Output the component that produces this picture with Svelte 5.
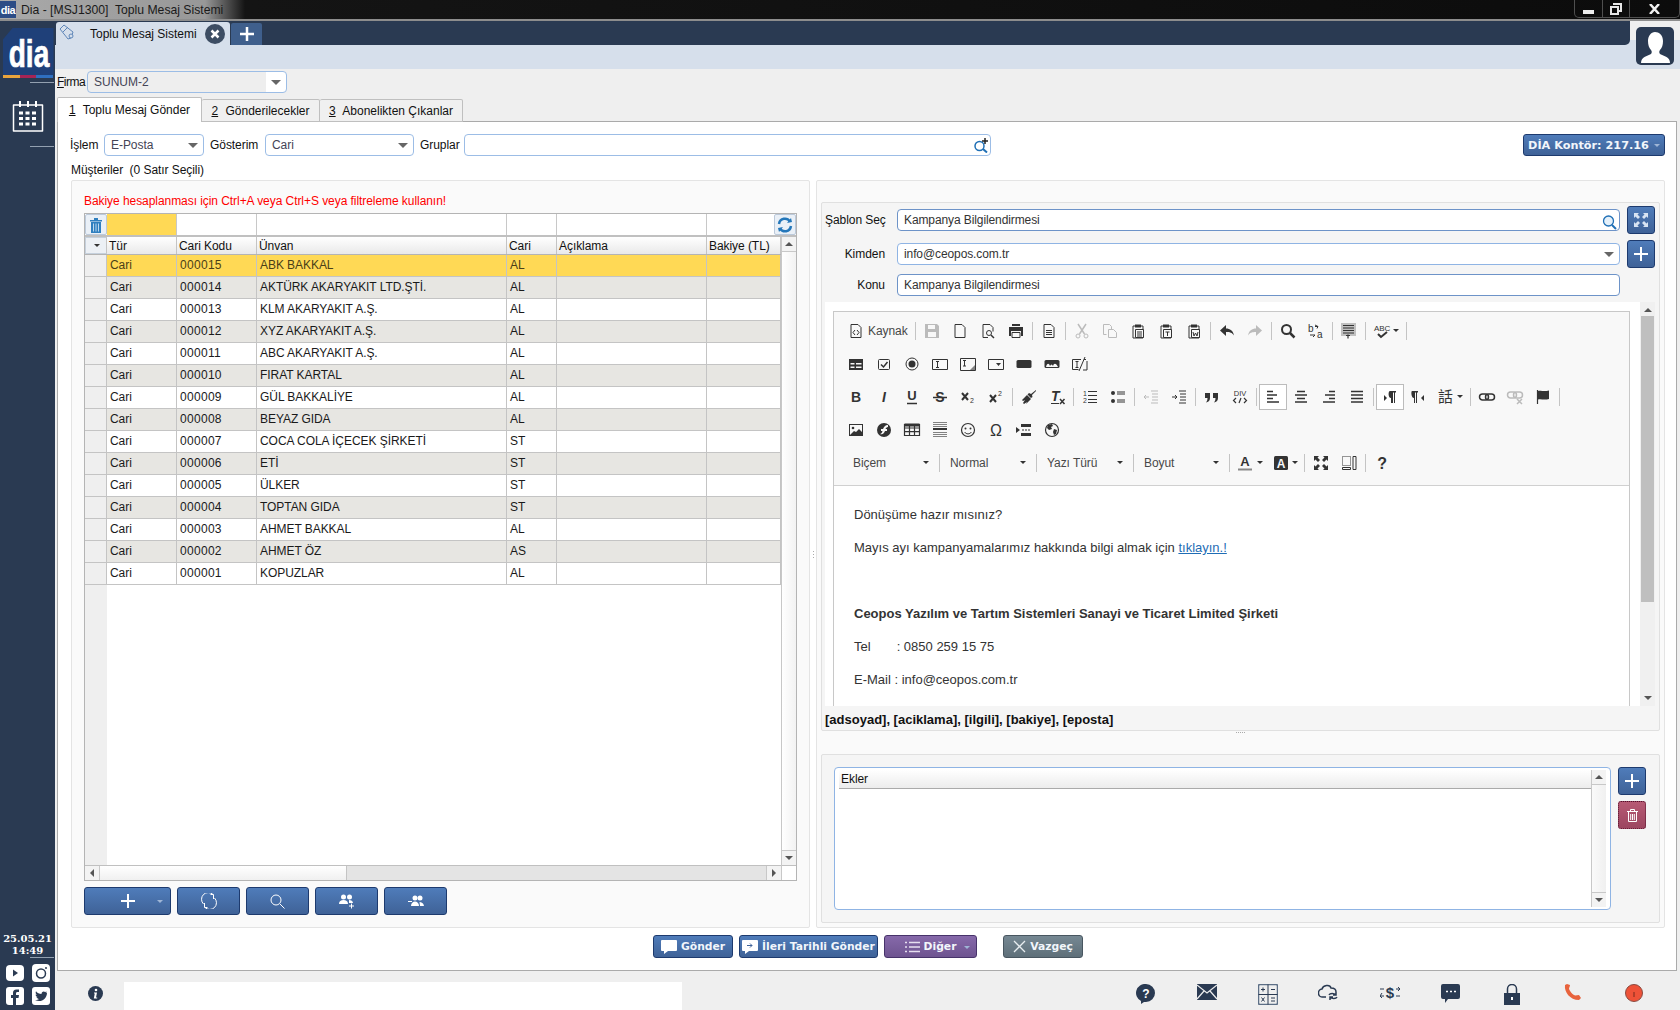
<script>
  const rows = [
    ['000015', 'ABK BAKKAL', 'AL'],
    ['000014', 'AKTÜRK AKARYAKIT LTD.ŞTİ.', 'AL'],
    ['000013', 'KLM AKARYAKIT A.Ş.', 'AL'],
    ['000012', 'XYZ AKARYAKIT A.Ş.', 'AL'],
    ['000011', 'ABC AKARYAKIT A.Ş.', 'AL'],
    ['000010', 'FIRAT KARTAL', 'AL'],
    ['000009', 'GÜL BAKKALİYE', 'AL'],
    ['000008', 'BEYAZ GIDA', 'AL'],
    ['000007', 'COCA COLA İÇECEK ŞİRKETİ', 'ST'],
    ['000006', 'ETİ', 'ST'],
    ['000005', 'ÜLKER', 'ST'],
    ['000004', 'TOPTAN GIDA', 'ST'],
    ['000003', 'AHMET BAKKAL', 'AL'],
    ['000002', 'AHMET ÖZ', 'AS'],
    ['000001', 'KOPUZLAR', 'AL']
  ]

  const f = 'fill="currentColor" stroke="none"'
  const lines = (x1, x2, ys) => ys.map((y) => `<path d="M${x1} ${y}H${x2}"/>`).join('')
  const clip = '<path d="M5 3H3v12h10V3h-2"/><path d="M5 1.500h6v3H5z" ' + f + '/>'

  // editor icons, 16 box
  const ic = {
    source: '<path d="M3 1.500h7l3 3v10H3z"/><path d="M7 7 5 9.500l2 2.500M9 7l2 2.500L9 12"/>',
    save: `<path ${f} d="M1 1h12l2 2v12H1z"/><path d="M4 2h7v4H4zM4 9h8v5H4z" fill="#f8f8f8" stroke="none"/>`,
    newpage: '<path d="M3 1.500h7l3 3v10H3z"/>',
    preview: '<path d="M3 14.500v-13h7l3 3v4"/><path d="M3 14.500h5"/><circle cx="9" cy="10" r="2.500"/><path d="m11 12 3 3" stroke-width="1.500"/>',
    print: `<path ${f} d="M4 1h8v2H4zM1 4h14v9h-2V8H3v5H1z"/><path d="M4 9.500h8v5H4z"/>`,
    doc: '<path d="M3 1.500h7l3 3v10H3z"/>' + lines(5, 11, [7.5, 9.5, 11.5]),
    cut: '<path d="M4 1l6.500 10M12 1 5.500 11" stroke-width="1.500"/><circle cx="4" cy="13" r="2"/><circle cx="12" cy="13" r="2"/>',
    copy: '<path d="M1.500 1.500h6l2 2v3M1.500 1.500v10h3"/><path d="M6.500 6.500h5l3 3v5h-8z"/>',
    paste: clip + '<path d="M5.500 6.500h8v8h-8z" fill="#f8f8f8"/>' + lines(7, 12, [9, 11, 13]),
    pastet: clip + '<path d="M5.500 6.500h8v8h-8z" fill="#f8f8f8"/><path d="M7.500 9h4M9.500 9v4"/>',
    pastew: clip + '<path d="M5.500 6.500h8v8h-8z" fill="#f8f8f8"/><path d="M7 9l1 4 1.500-3 1.500 3 1-4"/>',
    undo: `<path ${f} d="M1 7.500 7 2v3.500c4 0 7 2 8 7-2-3-4-3.500-8-3.500V13z"/>`,
    redo: `<path ${f} d="M15 7.500 9 2v3.500c-4 0-7 2-8 7 2-3 4-3.500 8-3.500V13z"/>`,
    find: '<circle cx="6.500" cy="6.500" r="4.500" stroke-width="2"/><path d="m10 10 4.500 4.500" stroke-width="2.500"/>',
    replace: '<text x="0" y="8.500" font-size="10" fill="currentColor" stroke="none">b</text><text x="9" y="15" font-size="10" fill="currentColor" stroke="none">a</text><path d="m7 2 3 1.500-1 2M7 3.500h3M2 12h5l-2 2"/>',
    selectall: `<path ${f} d="M0 0h15v13H0z" opacity=".28"/><path stroke-width="1.200" d="M2 2.500h11M2 5h11M2 7.500h11M2 10h11M5 12.500h4M7 11.500v4"/>`,
    spell: '<text x="0" y="7.500" font-size="8" fill="currentColor" stroke="none">ABC</text><path d="m4 11 3 3 6-5" stroke-width="2"/>',
    form: `<path ${f} d="M1 3h14v11H1z"/><path d="M2.500 7h4v1.500h-4zM2.500 10.500h4V12h-4zM8 7h5.500v1.500H8zM8 10.500h5.500V12H8z" fill="#f8f8f8" stroke="none"/>`,
    check: '<rect x="2.500" y="3.500" width="11" height="10" rx="1"/><path d="m5 8.500 2.500 2.500 4-5" stroke-width="1.500"/>',
    radio: `<circle cx="8" cy="8" r="6"/><circle cx="8" cy="8" r="3.500" ${f}/>`,
    text: '<path d="M.5 3.500h15v10H.5zM4 5.500h3M4 11.500h3M5.500 5.500v6"/>',
    area: `<path d="M.5 2.500h15v12H.5zM3 4.500h3M3 10h3M4.500 4.500V10"/><path ${f} d="M15 9v5H10z" opacity=".6"/>`,
    select: `<path d="M.5 3.500h15v10H.5z"/><path ${f} d="m8 7h5l-2.500 3z"/>`,
    button: `<rect x=".5" y="4" width="15" height="8" rx="1.500" ${f}/>`,
    imgbutton: `<rect x=".5" y="4" width="15" height="8" rx="1.500" ${f}/><path d="M2 11c1-4 3-4 4-1 1-2 2-2 3 0 1-3 3-3 5 1z" fill="#f8f8f8" stroke="none"/>`,
    hidden: '<path d="M9 3.500H.5v10h6M12 3.500h2M15 5v9h-4" /><path d="M3.500 5.500h3M3.500 11.500h3M5 5.500v6M7 15 13 1"/>',
    b: '<text x="8" y="13" font-size="14" font-weight="700" text-anchor="middle" fill="currentColor" stroke="none">B</text>',
    i: '<text x="8" y="13" font-size="14" font-weight="700" font-style="italic" text-anchor="middle" fill="currentColor" stroke="none">I</text>',
    u: '<text x="8" y="11" font-size="13" font-weight="700" text-anchor="middle" fill="currentColor" stroke="none">U</text><path d="M3 14.500h10" stroke-width="1.500"/>',
    s: '<text x="8" y="13" font-size="14" font-weight="700" text-anchor="middle" fill="currentColor" stroke="none">S</text><path d="M1 8.500h14" stroke-width="1.500"/>',
    sub: '<path d="m2 4 6 7M8 4l-6 7" stroke-width="2"/><text x="10" y="14" font-size="7" fill="currentColor" stroke="none">2</text>',
    sup: '<path d="m2 6 6 7M8 6l-6 7" stroke-width="2"/><text x="10" y="6.500" font-size="7" fill="currentColor" stroke="none">2</text>',
    brush: `<path ${f} d="M15 1 10 5 8 4l-1.500 1.500 3.500 3.500L11.500 8 11 6l4-4zM6 6 1 11l1 1 2-1-2 3 1 1 3-2-1 2 5-5z"/>`,
    clear: '<text x="2" y="12" font-size="14" font-weight="700" font-style="italic" fill="currentColor" stroke="none">T</text><path d="M2 14.500h8"/><path d="m11 10 4.500 5M15.500 10 11 15" stroke-width="1.500"/>',
    ol: '<text x="1" y="7" font-size="7" fill="currentColor" stroke="none">1</text><text x="1" y="14" font-size="7" fill="currentColor" stroke="none">2</text>' + lines(6, 15, [2.5, 6.5, 10.5, 13.5]),
    ul: `<circle cx="3" cy="4" r="2" ${f}/><circle cx="3" cy="12" r="2" ${f}/>` + lines(7, 15, [3, 5, 11, 13]),
    outdent: '<path d="M8 2h7M9 5h6M9 8h6M9 11h6M8 14h7M1 8h5M3 6 1 8l2 2"/>',
    indent: '<path d="M8 2h7M9 5h6M9 8h6M9 11h6M8 14h7M1 8h5M4 6l2 2-2 2"/>',
    quote: `<path ${f} d="M1 4h5v5c0 3-2 4-4 4.500C3 12 3.500 11 3.500 9H1zM9 4h5v5c0 3-2 4-4 4.500 1-1.500 1.500-2.500 1.500-4.500H9z"/>`,
    div: '<text x="8" y="7" font-size="7.500" text-anchor="middle" fill="currentColor" stroke="none">DIV</text><path d="M4 9 1.500 11.500 4 14M12 9l2.500 2.500L12 14M9 9l-2 5" stroke-width="1.200"/>',
    left: '<path stroke-width="1.500" d="M2 2.500h6M2 6h10M2 9.500h6M2 13h12"/>',
    center: '<path stroke-width="1.500" d="M4 2.500h8M2 6h12M4 9.500h8M2 13h12"/>',
    right: '<path stroke-width="1.500" d="M8 2.500h6M4 6h10M8 9.500h6M2 13h12"/>',
    justify: '<path stroke-width="1.500" d="M2 2.500h12M2 6h12M2 9.500h12M2 13h12"/>',
    ltr: `<path ${f} d="M2 6l3 3-3 3zM8 2h6v1.500h-1V14h-1V3.500h-1V14H9V9c-3 0-3-7-1-7z"/>`,
    rtl: `<path ${f} d="M14 6l-3 3 3 3zM2 2h6v1.500H7V14H6V3.500H5V14H4V9c-3 0-3-7-2-7z"/>`,
    lang: '<text x="0" y="13" font-size="15" fill="currentColor" stroke="none" font-family="Noto Sans CJK TC">話</text>',
    link: '<rect x=".5" y="5" width="9" height="6" rx="3" stroke-width="1.500"/><rect x="6.500" y="5" width="9" height="6" rx="3" stroke-width="1.500"/>',
    unlink: '<rect x=".5" y="3" width="9" height="6" rx="3" stroke-width="1.500"/><rect x="6.500" y="3" width="9" height="6" rx="3" stroke-width="1.500"/><path d="m10 10 5 5M15 10l-5 5" stroke-width="1.500"/>',
    anchor: `<path d="M2.500 1v14" stroke-width="1.200"/><path ${f} d="M3 2c3-1 5 1 11-.5V10c-5 1.500-8-.5-11 .5z"/>`,
    image: `<path ${f} d="M1 2h14v12H1z"/><path d="M2 3h12v7l-3-3-3 3-2-1-4 4z" fill="#f8f8f8" stroke="none"/><circle cx="5" cy="6" r="1.300" ${f}/>`,
    flash: `<circle cx="8" cy="8" r="7" ${f}/><path d="M12 3c-3 0-4 2-5 4H5v2h1.500c-.5 2-1.500 3-2.500 3 3 1 4-1 5-3h2V7H9.500c.5-1 1-2 2.500-2z" fill="#f8f8f8" stroke="none"/>`,
    table: '<path stroke-width="1.200" d="M.5 2.500h15v11H.5zM.5 6h15M.5 9.700h15M5.500 2.500v11M10.500 2.500v11"/><path stroke-width="3" d="M.5 3h15"/>',
    hr: '<path d="M1 .5h14M1 2.500h14M1 4.500h14" opacity=".6"/><path d="M1 7h14" stroke-width="2"/><path d="M1 10.500h14M1 12.500h14M1 14.500h14" opacity=".6"/>',
    smile: `<circle cx="8" cy="8" r="6.500" stroke-width="1.200"/><circle cx="5.500" cy="6.500" r="1" ${f}/><circle cx="10.500" cy="6.500" r="1" ${f}/><path d="M4.500 10c2 2.500 5 2.500 7 0"/>`,
    omega: '<text x="8" y="14" font-size="16" text-anchor="middle" fill="currentColor" stroke="none">Ω</text>',
    pagebreak: `<path ${f} d="M0 5l4 3-4 3zM5 2h10v3H5zM5 11h10v3H5z"/><path d="M6 8h9" stroke-dasharray="2 1"/>`,
    globe: `<circle cx="8" cy="8" r="6.500" stroke-width="1.200"/><path ${f} d="M4 3l4-1 1 2-2 1 1 2-3 1-2-2zM10 7l3 1-1 4-2 1-1-3z"/>`,
    fgcolor: '<text x="7" y="11" font-size="13" font-weight="700" text-anchor="middle" fill="currentColor" stroke="none">A</text><path d="M0 14.500h14" stroke="#888" stroke-width="2"/>',
    bgcolor: `<rect x="1" y="1" width="14" height="14" rx="1.500" ${f}/><text x="8" y="13" font-size="12" font-weight="700" text-anchor="middle" fill="#f8f8f8" stroke="none">A</text>`,
    maximize: `<path ${f} d="M1 1h5L4.500 2.500 7 5 5 7 2.500 4.500 1 6zM15 1v5l-1.500-1.500L11 7 9 5l2.500-2.500L10 1zM1 15v-5l1.500 1.500L5 9l2 2-2.500 2.500L6 15zM15 15h-5l1.500-1.500L9 11l2-2 2.500 2.500L15 10z"/>`,
    blocks: '<path stroke-dasharray="1 1" d="M1.500 1.500h8v9h-8z"/><path d="M1.500 12.500h8v2h-8zM12 1.500h3v13h-3z"/>',
    help: '<text x="8" y="14" font-size="16" font-weight="700" text-anchor="middle" fill="currentColor" stroke="none">?</text>'
  }

  const bar1 = [
    ['save', 'dim'], ['newpage'], ['preview'], ['print'], null, ['doc'], null,
    ['cut', 'dim'], ['copy', 'dim'], ['paste'], ['pastet'], ['pastew'], null,
    ['undo'], ['redo', 'dim'], null, ['find'], ['replace'], null, ['selectall'], null
  ]
  const bar2 = ['form', 'check', 'radio', 'text', 'area', 'select', 'button', 'imgbutton', 'hidden'].map((n) => [n])
  const bar3 = [
    ['b'], ['i'], ['u'], ['s'], ['sub'], ['sup'], null, ['brush'], ['clear'], null, ['ol'], ['ul'], null,
    ['outdent', 'dim'], ['indent'], null, ['quote'], ['div'], null,
    ['left', 'on'], ['center'], ['right'], ['justify'], null, ['ltr', 'on'], ['rtl'], ['lang', 'drop'], null,
    ['link'], ['unlink', 'dim'], ['anchor'], null
  ]
  const bar4 = ['image', 'flash', 'table', 'hr', 'smile', 'omega', 'pagebreak', 'globe'].map((n) => [n])
  const combos = [['Biçem', 95], ['Normal', 92], ['Yazı Türü', 92], ['Boyut', 91]]
</script>

{#snippet tool(item)}
  {#if item === null}
    <span class="sep"></span>
  {:else}
    <span class="tool" class:dim={item[1] === 'dim'} class:on={item[1] === 'on'} class:wide={item[1] === 'drop'}>
      <svg width="16" height="16" viewBox="0 0 16 16" fill="none" stroke="currentColor">{@html ic[item[0]]}</svg>
      {#if item[1] === 'drop'}<span class="mini"></span>{/if}
    </span>
  {/if}
{/snippet}

<div class="app">
  <header class="titlebar">
    <div class="winlogo">dia</div>
    <span class="wintitle">Dia - [MSJ1300]&nbsp; Toplu Mesaj Sistemi</span>
    <div class="winbtns">
      <span class="wb w1"><i class="min"></i></span>
      <span class="wb w2"><svg width="12" height="12" viewBox="0 0 12 12" fill="none" stroke="#e8e8e8" stroke-width="2"><path d="M4 2V1h7v7h-2"/><path d="M1 4h7v7H1z"/></svg></span>
      <span class="wb w3"><svg width="11" height="10" viewBox="0 0 11 10" stroke="#f0f0f0" stroke-width="2.500"><path d="m1 0 9 10M10 0 1 10"/></svg></span>
    </div>
  </header>

  <div class="shell">
    <aside class="sidebar">
      <div class="logo"><span>dia</span></div>
      <div class="stripe"><i style="background:#e8a33d"></i><i style="background:#a62455"></i><i style="background:#2f6fc0"></i></div>
      <div class="rule"></div>
      <svg class="cal" width="32" height="32" viewBox="0 0 32 32" fill="none" stroke="#fff">
        <path stroke-width="1.500" d="M1.500 5h29v26h-29z" stroke-linejoin="round"/>
        <path stroke-width="2" d="M8 1v6M16 1v6M24 1v6"/>
        <path stroke-width="3" stroke-dasharray="4 2.500" d="M7 13h19M7 18.500h19M7 24h19"/>
      </svg>
      <div class="rule r2"></div>
      <div class="clock"><b>25.05.21</b><b>14:49</b></div>
      <div class="rule r3"></div>
      <div class="social">
        <svg width="18" height="16" viewBox="0 0 18 16"><rect width="18" height="16" rx="4" fill="#fff"/><path d="m7 4.500 5 3.500-5 3.500z" fill="#2a3a52"/></svg>
        <svg width="18" height="18" viewBox="0 0 18 18" fill="none"><rect width="18" height="18" rx="4" fill="#fff"/><circle cx="9" cy="9.500" r="4.500" stroke="#2a3a52" stroke-width="1.500"/><circle cx="14" cy="4" r="1" fill="#2a3a52"/></svg>
        <svg width="18" height="18" viewBox="0 0 18 18"><rect width="18" height="18" rx="3" fill="#fff"/><path d="M10 18v-7h2.500l.5-3h-3V6.500c0-1 .5-1.500 1.500-1.500H13V2.500h-2.500C8 2.500 7 4 7 6v2H5v3h2v7z" fill="#2a3a52"/></svg>
        <svg width="18" height="18" viewBox="0 0 18 18"><rect width="18" height="18" rx="3" fill="#fff"/><path d="M15 5.500c-.5.200-1 .400-1.500.400.500-.300 1-.800 1.200-1.400-.5.300-1 .500-1.600.600C12 3.800 9.300 4.500 9.500 7 7.300 7 5.300 6 4 4.300c-.7 1.200-.3 2.700.8 3.500-.4 0-.8-.100-1.200-.300 0 1.300.9 2.300 2.100 2.600-.4.100-.8.100-1.200 0 .3 1 1.300 1.800 2.400 1.800C6 12.700 4.500 13.200 3 13c5.500 3 12-.5 12-7.500z" fill="#2a3a52"/></svg>
      </div>
    </aside>

    <main class="main">
      <div class="tabbar">
        <div class="apptab">
          <svg class="tabicon" width="16" height="16" viewBox="0 0 16 16" fill="none" stroke="#5f86b8"><path d="m1 5 4-4 9 7-2 6-3 1z"/><path d="m4 8 5-5" /><circle cx="12" cy="12" r="2" fill="#d6dfeb"/></svg>
          <span class="tabtext">Toplu Mesaj Sistemi</span>
          <svg width="20" height="20" viewBox="0 0 20 20"><circle cx="10" cy="10" r="10" fill="#3d4d63"/><path d="m6.500 6.500 7 7M13.500 6.500l-7 7" stroke="#fff" stroke-width="2.500"/></svg>
        </div>
        <div class="addtab"><svg width="14" height="14" viewBox="0 0 14 14" stroke="#fff" stroke-width="2.500"><path d="M7 0v14M0 7h14"/></svg></div>
      </div>
      <div class="band"></div>
      <div class="avatar">
        <svg width="38" height="38" viewBox="0 0 38 38"><rect width="38" height="38" rx="5" fill="#2a3a52"/><path d="M5 36c0-6 6-7 10-9 1-1 1-3 0-4-2-2-3-5-3-9 0-5 3-9 7-9s8 3 8 9c0 4-1 7-3 9-1 1-1 3 0 4 4 2 10 3 10 9z" fill="#fff"/></svg>
      </div>

      <div class="firma">
        <label for="firma"><u>F</u>irma</label>
        <div class="combo firmabox" id="firma"><span class="val">SUNUM-2</span><span class="caret"></span></div>
      </div>

      <nav class="tabs">
        <span class="tab active"><u>1</u> Toplu Mesaj Gönder</span>
        <span class="tab t2"><u>2</u> Gönderilecekler</span>
        <span class="tab t3"><u>3</u> Abonelikten Çıkanlar</span>
      </nav>

      <section class="panel">
        <div class="filters">
          <span class="lbl l1">İşlem</span>
          <div class="combo c1"><span class="val">E-Posta</span><span class="caret"></span></div>
          <span class="lbl l2">Gösterim</span>
          <div class="combo c2"><span class="val">Cari</span><span class="caret"></span></div>
          <span class="lbl l3">Gruplar</span>
          <div class="combo c3">
            <svg width="16" height="16" viewBox="0 0 16 16" fill="none" stroke="#1f6fb5" stroke-width="1.500"><circle cx="6.500" cy="9" r="4.500"/><path d="m10 12 4 3.500" stroke-width="2"/><path d="M12 1v6M9 4h6" stroke="#222"/></svg>
          </div>
          <button class="btn kontor">DİA Kontör: 217.16<span class="mini light"></span></button>
        </div>
        <div class="selected">Müşteriler&nbsp; (0 Satır Seçili)</div>

        <div class="columns">
          <div class="left box">
            <div class="warn">Bakiye hesaplanması için Ctrl+A veya Ctrl+S veya filtreleme kullanın!</div>
            <div class="grid">
              <div class="frow">
                <span class="fbtn"><svg width="14" height="16" viewBox="0 0 14 16" fill="#2f7fbf"><path d="M1 3h12v1.500H1zM5 1h4v2H5zM2 5h10v11H2z"/><path d="M4.500 6.500v8M7 6.500v8M9.500 6.500v8" stroke="#bcd8ee"/></svg></span>
                <span class="fc yellow"></span><span class="fc w80"></span><span class="fc w250"></span><span class="fc w50"></span><span class="fc w150"></span>
                <span class="fc grow"></span>
                <span class="fbtn refresh"><svg width="16" height="16" viewBox="0 0 16 16" fill="none" stroke="#2477ba" stroke-width="2.500"><path d="M13 4.500C10 0 3 1 2 7M3 11.500c3 4.500 10 3.500 11-2.500"/><path d="m10 6 5-1-1-4zM6 10l-5 1 1 4z" fill="#2477ba" stroke="none"/></svg></span>
              </div>
              <div class="gbody">
                <div class="gmain">
                  <div class="ghead gcols">
                    <span class="gsel"><i class="mini"></i></span><span>Tür</span><span>Cari Kodu</span><span>Ünvan</span><span>Cari</span><span>Açıklama</span><span>Bakiye (TL)</span>
                  </div>
                  {#each rows as r, n}
                    <div class="grow-row gcols" class:cur={n === 0} class:alt={n % 2 === 1}>
                      <span class="ind"></span><span>Cari</span><span class="code">{r[0]}</span><span>{r[1]}</span><span>{r[2]}</span><span></span><span></span>
                    </div>
                  {/each}
                  <div class="gfill"><span class="ind"></span></div>
                  <div class="hscroll">
                    <span class="sbtn"><i class="arrow al"></i></span>
                    <span class="hthumb"></span>
                    <span class="htrack"></span>
                    <span class="sbtn"><i class="arrow ar"></i></span>
                  </div>
                </div>
                <div class="vscroll">
                  <span class="sbtn tall"><i class="arrow au"></i></span>
                  <span class="vtrack"></span>
                  <span class="sbtn tall"><i class="arrow ad"></i></span>
                  <span class="vcorner"></span>
                </div>
              </div>
            </div>
            <div class="gridbtns">
              <button class="btn gb add"><svg width="14" height="14" viewBox="0 0 14 14" stroke="#fff" stroke-width="2"><path d="M7 0v14M0 7h14"/></svg><span class="mini light"></span></button>
              <button class="btn gb"><svg width="16" height="16" viewBox="0 0 16 16" fill="none" stroke="#fff"><path d="M12 1.500A6.500 6.500 0 0 0 2.500 11M4 14.500A6.500 6.500 0 0 0 13.500 5M12.500 6V1.500h-3M3.500 10v4.500h3"/></svg></button>
              <button class="btn gb"><svg width="15" height="15" viewBox="0 0 15 15" fill="none" stroke="#fff"><circle cx="6" cy="6" r="5"/><path d="m10 10 4.500 4.500"/></svg></button>
              <button class="btn gb"><svg width="16" height="16" viewBox="0 0 16 16" fill="#fff"><circle cx="4.500" cy="4" r="2.500"/><circle cx="10.500" cy="4" r="2.500"/><path d="M0 11c0-3 2-4 4.500-4S9 8 9 11zM10 7c2 0 4 1 4 3H10z"/><path d="M12.500 10.500v5M10 13h5" stroke="#fff" fill="none"/></svg></button>
              <button class="btn gb"><svg width="16" height="12" viewBox="0 0 16 12" fill="#fff"><circle cx="7" cy="3" r="2.500"/><circle cx="12" cy="3" r="2.500"/><path d="M3 11c0-3 2-4.500 4-4.500s4 1.500 4 4.500zM11.500 7c2 0 4 1 4.500 4h-4zM0 6h4v1H0z"/></svg></button>
            </div>
          </div>

          <div class="split"><i></i><i></i><i></i></div>

          <div class="right box">
            <div class="mailbox">
              <div class="mailform">
                <span class="flabel">Şablon Seç</span>
                <div class="input strong">Kampanya Bilgilendirmesi
                  <svg width="16" height="16" viewBox="0 0 16 16" fill="none" stroke="#1f6fb5" stroke-width="1.300"><circle cx="6.500" cy="7" r="5" fill="#e4f0fa"/><path d="m10 11 4 4" stroke-width="2"/></svg>
                </div>
                <button class="btn sq"><svg width="14" height="14" viewBox="0 0 14 14" fill="#d8e4f3"><path d="M0 0h5L3.500 1.500 6 4 4 6 1.500 3.500 0 5zM14 0v5l-1.500-1.500L10 6 8 4l2.500-2.500L9 0zM0 14V9l1.500 1.500L4 8l2 2-2.500 2.500L5 14zM14 14H9l1.500-1.500L8 10l2-2 2.500 2.500L14 9z"/></svg></button>

                <span class="flabel">Kimden</span>
                <div class="input">info@ceopos.com.tr<span class="caret"></span></div>
                <button class="btn sq"><svg width="14" height="14" viewBox="0 0 14 14" stroke="#fff" stroke-width="2"><path d="M7 0v14M0 7h14"/></svg></button>

                <span class="flabel">Konu</span>
                <div class="input strong">Kampanya Bilgilendirmesi</div>
              </div>

              <div class="editorwrap">
                <div class="editor">
                  <div class="toolbar">
                    <div class="trow">
                      <span class="kaynak">
                        <svg width="16" height="16" viewBox="0 0 16 16" fill="none" stroke="currentColor">{@html ic.source}</svg>
                        <span>Kaynak</span>
                      </span>
                      <span class="sep"></span>
                      {#each bar1 as item}{@render tool(item)}{/each}
                      <span class="tool wide">
                        <svg width="16" height="16" viewBox="0 0 16 16" fill="none" stroke="currentColor">{@html ic.spell}</svg><span class="mini"></span>
                      </span>
                      <span class="sep"></span>
                    </div>
                    <div class="trow">{#each bar2 as item}{@render tool(item)}{/each}</div>
                    <div class="trow">{#each bar3 as item}{@render tool(item)}{/each}</div>
                    <div class="trow">{#each bar4 as item}{@render tool(item)}{/each}</div>
                    <div class="trow">
                      {#each combos as c}
                        <span class="tcombo" style="width:{c[1]}px"><span>{c[0]}</span><i class="mini"></i></span><span class="sep"></span>
                      {/each}
                      <span class="tool colour"><svg width="16" height="16" viewBox="0 0 16 16" fill="none" stroke="currentColor">{@html ic.fgcolor}</svg><span class="mini"></span></span>
                      <span class="tool colour"><svg width="16" height="16" viewBox="0 0 16 16" fill="none" stroke="currentColor">{@html ic.bgcolor}</svg><span class="mini"></span></span>
                      <span class="sep"></span>
                      {@render tool(['maximize'])}
                      {@render tool(['blocks'])}
                      <span class="sep"></span>
                      {@render tool(['help'])}
                    </div>
                  </div>
                  <div class="mail">
                    <p>Dönüşüme hazır mısınız?</p>
                    <p>Mayıs ayı kampanyamalarımız hakkında bilgi almak için <a href="#top">tıklayın.!</a></p>
                    <p>&nbsp;</p>
                    <p><b>Ceopos Yazılım ve Tartım Sistemleri Sanayi ve Ticaret Limited Şirketi</b></p>
                    <p>Tel<span class="tab-gap"></span>: 0850 259 15 75</p>
                    <p>E-Mail : info@ceopos.com.tr</p>
                  </div>
                </div>
                <div class="edscroll">
                  <i class="arrow au"></i>
                  <span class="edthumb"></span>
                  <i class="arrow ad"></i>
                </div>
              </div>
              <div class="tags">[adsoyad], [aciklama], [ilgili], [bakiye], [eposta]</div>
            </div>
            <div class="hsplit"><i></i><i></i><i></i><i></i><i></i></div>
            <div class="attach">
              <div class="ekler">
                <div class="eklermain"><div class="eklerhead">Ekler</div></div>
                <div class="eklerscroll">
                  <span class="sbtn tall"><i class="arrow au"></i></span>
                  <span class="vtrack soft"></span>
                  <span class="sbtn tall"><i class="arrow ad"></i></span>
                </div>
              </div>
              <div class="attachbtns">
                <button class="btn sq"><svg width="14" height="14" viewBox="0 0 14 14" stroke="#fff" stroke-width="2"><path d="M7 0v14M0 7h14"/></svg></button>
                <button class="btn sq red"><svg width="11" height="13" viewBox="0 0 11 13" fill="none" stroke="#fff"><path d="M0 2.500h11M3.500 2.500v-2h4v2M1.500 2.500v10h8v-10M3.700 5v6M5.500 5v6M7.300 5v6"/></svg></button>
              </div>
            </div>
          </div>
        </div>

        <div class="actions">
          <button class="btn act send"><svg width="16" height="14" viewBox="0 0 16 14" fill="#fff"><path d="M1 0h14a1 1 0 0 1 1 1v9a1 1 0 0 1-1 1H7l-4 3v-3H1a1 1 0 0 1-1-1V1a1 1 0 0 1 1-1z"/></svg>Gönder</button>
          <button class="btn act later"><svg width="16" height="14" viewBox="0 0 16 14" fill="#fff"><path d="M1 0h14a1 1 0 0 1 1 1v9a1 1 0 0 1-1 1H7l-4 3v-3H1a1 1 0 0 1-1-1V1a1 1 0 0 1 1-1z"/><path d="M5 5.500h5M8 3.500l2 2-2 2" stroke="#3f6299" fill="none"/></svg>İleri Tarihli Gönder</button>
          <button class="btn act other"><svg width="15" height="12" viewBox="0 0 15 12" stroke="#e6dff0" stroke-width="1.500"><path d="M0 1.500h2M4 1.500h11M0 6h2M4 6h11M0 10.500h2M4 10.500h11"/></svg>Diğer<span class="mini light"></span></button>
          <button class="btn act cancel"><svg width="13" height="13" viewBox="0 0 13 13" stroke="#e8edf0" stroke-width="1.300"><path d="m1 1 11 11M12 1 1 12"/></svg>Vazgeç</button>
        </div>
      </section>

      <footer class="footer">
        <svg class="info" width="15" height="15" viewBox="0 0 15 15"><circle cx="7.500" cy="7.500" r="7.500" fill="#2a3a52"/><circle cx="8" cy="4" r="1.300" fill="#fff"/><path d="M6 6.500h3l-1 5h1.200v1H5.800l1-5H6z" fill="#fff"/></svg>
        <div class="msgbox"></div>
        <div class="ficons">
          <svg width="20" height="20" viewBox="0 0 20 20"><path d="M10 0a9 9 0 0 1 0 18H8l-3 2v-3A9 9 0 0 1 10 0z" fill="#2a3a52"/><text x="10" y="14" font-size="12" font-weight="700" text-anchor="middle" fill="#fff" font-family="Liberation Sans">?</text></svg>
          <svg width="20" height="16" viewBox="0 0 20 16"><path d="M0 0h20v16H0z" fill="#2a3a52"/><path d="m0 1 10 8 10-8M0 15l7-8M20 15l-7-8" fill="none" stroke="#eee" stroke-width="1.200"/></svg>
          <svg width="20" height="21" viewBox="0 0 20 21" fill="none" stroke="#5d6f86"><rect x=".5" y=".5" width="19" height="20" rx="1.500" stroke-width="1.500"/><path d="M10 .5v20M.5 10.500h19M3 5.500h4M5 3.500v4M13 5.500h4M3.500 13.500l3 4M6.500 13.500l-3 4M13 14h4M13 17h4" stroke="#2a3a52"/></svg>
          <svg width="21" height="16" viewBox="0 0 21 16" fill="none" stroke="#2a3a52" stroke-width="1.500"><path d="M8 13H5a4 4 0 0 1-1-8c1-4 8-5 9-1 4 0 5 2 5 4"/><path d="M11 11c1-2 5-2 7 0M18 8v3h-3M19 13c-1 2-5 2-7 0M12 16v-3h3"/></svg>
          <svg width="20" height="17" viewBox="0 0 20 17" fill="none" stroke="#2a3a52"><text x="10" y="14" font-size="15" font-weight="700" text-anchor="middle" fill="#2a3a52" stroke="none" font-family="Liberation Sans">$</text><path d="M0 5h4M0 12h4M16 5h4M16 12h4M2 9l-2 3 2 2M18 3l2 2-2 2"/></svg>
          <svg width="19" height="19" viewBox="0 0 19 19"><path d="M2 0h15a2 2 0 0 1 2 2v11a2 2 0 0 1-2 2H7l-3 4v-4H2a2 2 0 0 1-2-2V2a2 2 0 0 1 2-2z" fill="#2a3a52"/><path d="M5 7.500h2M9 7.500h2M13 7.500h2" stroke="#fff" stroke-width="1.500"/></svg>
          <svg width="16" height="21" viewBox="0 0 16 21"><path d="M3.500 9V5a4.500 4.500 0 0 1 9 0v4" fill="none" stroke="#2a3a52" stroke-width="1.500"/><path d="M0 9h16v12H0z" fill="#2a3a52"/><rect x="7" y="13" width="2" height="3" fill="#fff"/></svg>
          <svg width="17" height="17" viewBox="0 0 17 17"><path d="M1 1c-1 7 5 15 14 15l2-2-2-3c-2 0-4 1-5 0-2-1-4-4-5-6 0-1 1-3 1-4L3 0z" fill="#e8633d"/></svg>
          <svg width="18" height="18" viewBox="0 0 18 18"><circle cx="9" cy="9" r="8.500" fill="#ee5238" stroke="#8a4a40"/><path d="M9 8v5" stroke="#7a2a1c"/></svg>
        </div>
      </footer>
    </main>
  </div>
</div>

<style>
  :global(body) {
    margin: 0;
    background: #efefef;
  }
  .app {
    width: 1680px;
    height: 1010px;
    overflow: hidden;
    isolation: isolate;
    display: flex;
    flex-direction: column;
    font-family: "Liberation Sans", Arial, sans-serif;
    font-size: 12px;
    color: #111;
  }
  button {
    font-family: inherit;
    padding: 0;
    cursor: pointer;
  }
  .titlebar {
    height: 19px;
    flex: none;
    border-bottom: 2px solid #8d8d8d;
    box-sizing: content-box;
    display: flex;
    align-items: center;
    background: linear-gradient(90deg, #a9a9a9 0, #989898 205px, #141414 245px, #0c0c0c 100%);
  }
  .winlogo {
    width: 16px;
    height: 17px;
    background: #2c4c86;
    color: #fff;
    font-weight: 700;
    font-size: 11px;
    line-height: 19px;
    text-align: center;
    letter-spacing: -0.5px;
    overflow: hidden;
  }
  .wintitle {
    margin-left: 5px;
    font-size: 12.2px;
    color: #1a1a1a;
  }
  .winbtns {
    margin-left: auto;
    display: flex;
    align-self: flex-start;
    height: 17px;
    border: 1px solid #4f4f4f;
    border-top: 0;
    border-radius: 0 0 5px 5px;
  }
  .wb {
    display: flex;
    align-items: center;
    justify-content: center;
    border-left: 1px solid #4f4f4f;
  }
  .w1 {
    width: 27px;
    border-left: 0;
  }
  .w2 {
    width: 26px;
  }
  .w3 {
    width: 49px;
  }
  .min {
    width: 11px;
    height: 4px;
    margin-top: 6px;
    background: #eee;
  }
  .shell {
    flex: 1;
    display: flex;
    min-height: 0;
  }
  .sidebar {
    width: 55px;
    flex: none;
    background: #2a3a52;
    display: flex;
    flex-direction: column;
    align-items: center;
  }
  .logo {
    width: 51px;
    height: 47px;
    margin: 7px 0 0 1px;
    background: #1f4079;
    clip-path: polygon(10px 0, 100% 0, 100% 100%, 0 100%, 0 12px);
    color: #fff;
    font-weight: 700;
    font-size: 39px;
    line-height: 47px;
    text-align: center;
    overflow: hidden;
  }
  .logo span {
    display: block;
    transform: scaleX(0.72) translate(-2px, 2px);
    -webkit-text-stroke: 0.7px #fff;
  }
  .stripe {
    width: 50px;
    height: 3px;
    margin-left: 1px;
    display: flex;
  }
  .stripe i {
    flex: 1;
  }
  .rule {
    width: 24px;
    height: 1px;
    background: #93a0b0;
    margin: 4px 0 17px 28px;
  }
  .rule.r2 {
    margin: 14px 0 0 28px;
  }
  .rule.r3 {
    margin: 0 0 0 28px;
  }
  .cal {
    flex: none;
  }
  .clock {
    margin-top: auto;
    color: #fff;
    font-family: "DejaVu Serif", serif;
    font-size: 10px;
    line-height: 12px;
    display: flex;
    flex-direction: column;
    align-items: center;
  }
  .social {
    display: grid;
    grid-template-columns: 18px 18px;
    gap: 5px 8px;
    margin: 6px 0 5px;
    align-items: center;
  }
  .main {
    width: 1625px;
    flex: none;
    position: relative;
    display: flex;
    flex-direction: column;
  }
  .tabbar {
    height: 24px;
    flex: none;
    background: #2a3a52;
    margin-right: 50px;
    border-radius: 0 0 5px 0;
    display: flex;
    align-items: flex-end;
  }
  .band {
    height: 29px;
    flex: none;
    background: #d6dfeb;
    margin-top: -5px;
    position: relative;
    z-index: -1;
  }
  .apptab {
    width: 174px;
    height: 23px;
    margin-left: 1px;
    background: #d6dfeb;
    border-radius: 3px 3px 0 0;
    display: flex;
    align-items: center;
    box-sizing: border-box;
    padding: 0 5px 0 3px;
  }
  .tabicon {
    align-self: flex-start;
    margin-top: 2px;
  }
  .tabtext {
    margin-left: 15px;
    flex: 1;
    font-size: 12px;
  }
  .addtab {
    width: 31px;
    height: 22px;
    margin-left: 1px;
    background: #3f5f8c;
    border-radius: 2px 2px 0 0;
    display: flex;
    align-items: center;
    justify-content: center;
  }
  .avatar {
    position: absolute;
    top: 6px;
    right: 6px;
    height: 38px;
  }
  .firma {
    height: 28px;
    flex: none;
    display: flex;
    align-items: center;
    padding: 0 0 2px 2px;
    box-sizing: border-box;
  }
  .firma label {
    width: 30px;
    letter-spacing: -0.5px;
  }
  .combo {
    box-sizing: border-box;
    height: 22px;
    border: 1px solid #9cbde6;
    border-radius: 4px;
    background: #fff;
    display: flex;
    align-items: center;
    color: #445;
    font-size: 12px;
  }
  .val {
    flex: 1;
    padding-left: 6px;
  }
  .firmabox {
    width: 200px;
    background: linear-gradient(90deg, #eee 0, #eee 178px, #fff 178px);
  }
  .caret {
    width: 0;
    height: 0;
    margin: 1px 5px 0 auto;
    border-style: solid;
    border-width: 5px 5px 0;
    border-color: #666 transparent transparent;
  }
  .tabs {
    height: 25px;
    flex: none;
    margin: 0 0 -1px 2px;
    display: flex;
    align-items: flex-end;
    position: relative;
    z-index: 1;
  }
  .tab {
    box-sizing: border-box;
    height: 23px;
    width: 118px;
    background: #f0f0f0;
    border: 1px solid #bfbfbf;
    border-left: 0;
    border-radius: 2px 2px 0 0;
    display: flex;
    align-items: center;
    justify-content: center;
    gap: 4px;
    white-space: pre;
  }
  .tab.active {
    width: 145px;
    height: 25px;
    background: #fff;
    border: 1px solid #bfbfbf;
    border-bottom: 0;
  }
  .tab.t3 {
    width: 143px;
  }
  .panel {
    box-sizing: border-box;
    width: 1620px;
    height: 850px;
    margin-left: 2px;
    flex: none;
    background: #fff;
    border: 1px solid #aaa;
    padding: 12px 11px 0 13px;
    display: flex;
    flex-direction: column;
    letter-spacing: -0.06px;
  }
  .filters {
    height: 22px;
    flex: none;
    display: flex;
    align-items: center;
  }
  .lbl {
    flex: none;
  }
  .l1 {
    width: 34px;
    margin-left: -1px;
  }
  .l2 {
    width: 55px;
    margin-left: 6px;
  }
  .l3 {
    width: 44px;
    margin-left: 6px;
  }
  .c1 {
    width: 100px;
  }
  .c2 {
    width: 149px;
  }
  .c3 {
    width: 527px;
    justify-content: flex-end;
    padding-right: 1px;
  }
  .btn {
    background: linear-gradient(#4f7cba, #3f6297);
    border: 1px solid #1d3a6e;
    border-radius: 3px;
    color: #f2f6fb;
    font-weight: 700;
    display: flex;
    align-items: center;
    justify-content: center;
  }
  .kontor {
    margin-left: auto;
    width: 142px;
    height: 22px;
    font-family: "DejaVu Sans", sans-serif;
    font-size: 11.25px;
    gap: 5px;
    white-space: nowrap;
  }
  .selected {
    height: 16px;
    margin: 6px 0 2px;
    line-height: 16px;
    flex: none;
  }
  .columns {
    height: 748px;
    flex: none;
    display: flex;
  }
  .box {
    box-sizing: border-box;
    background: #fafafa;
    border: 1px solid #e4e4e4;
    border-radius: 2px;
  }
  .left {
    width: 739px;
    flex: none;
    padding: 13px 0 0 12px;
  }
  .warn {
    color: #f00;
    height: 19px;
    line-height: 15px;
  }
  .grid {
    box-sizing: border-box;
    width: 713px;
    height: 668px;
    border: 1px solid #b4b4b4;
    background: #fff;
    display: flex;
    flex-direction: column;
  }
  .frow {
    height: 23px;
    flex: none;
    display: flex;
    border-bottom: 2px solid #c0c0c0;
    box-sizing: border-box;
  }
  .fc {
    flex: none;
    border-right: 1px solid #c8c8c8;
    box-sizing: border-box;
  }
  .yellow {
    width: 70px;
    background: #ffd955;
  }
  .w80 {
    width: 80px;
  }
  .w250 {
    width: 250px;
  }
  .w50 {
    width: 50px;
  }
  .w150 {
    width: 150px;
  }
  .fc.grow {
    flex: 1;
    border-right: 0;
  }
  .fbtn {
    width: 22px;
    flex: none;
    background: #eaf0f7;
    border: 1px solid #bccadb;
    box-sizing: border-box;
    border-radius: 2px;
    display: flex;
    align-items: center;
    justify-content: center;
  }
  .gbody {
    flex: 1;
    min-height: 0;
    display: flex;
  }
  .gmain {
    flex: 1;
    min-width: 0;
    display: flex;
    flex-direction: column;
  }
  .gcols {
    display: grid;
    grid-template-columns: 22px 70px 80px 250px 50px 150px 1fr;
    flex: none;
  }
  .gcols span {
    box-sizing: border-box;
    border-right: 1px solid #c4c4c4;
    padding-left: 3px;
    white-space: nowrap;
    overflow: hidden;
  }
  .gcols .code {
    letter-spacing: 0.3px;
  }
  .ghead {
    height: 17px;
    line-height: 18px;
    background: linear-gradient(#fff, #e9e9e9);
    border-bottom: 1px solid #b4b4b4;
    box-sizing: content-box;
  }
  .ghead span {
    padding-left: 2px;
  }
  .gsel {
    background: #ecf0f5;
    border: 1px solid #c5d0dc;
    display: flex;
    align-items: center;
    justify-content: center;
  }
  .grow-row {
    height: 22px;
    box-sizing: border-box;
    line-height: 21px;
    border-bottom: 1px solid #c4c4c4;
    background: #fff;
    color: #1a1a1a;
  }
  .grow-row.alt {
    background: #e7e6e2;
  }
  .grow-row.cur {
    background: #ffd955;
    color: #4a3f18;
  }
  .ind {
    background: #efefef;
  }
  .gfill {
    flex: 1;
    display: flex;
  }
  .gfill .ind {
    width: 22px;
  }
  .hscroll {
    height: 15px;
    box-sizing: border-box;
    flex: none;
    display: flex;
    border-top: 1px solid #c0c0c0;
    background: #e6e6e6;
  }
  .sbtn {
    width: 14px;
    flex: none;
    background: #f3f3f3;
    border-right: 1px solid #c8c8c8;
    display: flex;
    align-items: center;
    justify-content: center;
  }
  .hscroll .sbtn:last-child {
    border-left: 1px solid #c8c8c8;
    border-right: 0;
  }
  .hthumb {
    width: 246px;
    background: linear-gradient(#fff, #f0f0f0);
    border-right: 1px solid #c4c4c4;
  }
  .htrack {
    flex: 1;
    background: #e4e4e4;
  }
  .vscroll {
    width: 14px;
    flex: none;
    display: flex;
    flex-direction: column;
    border-left: 1px solid #c8c8c8;
    background: #f4f4f4;
  }
  .vcorner {
    height: 15px;
    flex: none;
    background: #fff;
    border-top: 1px solid #c0c0c0;
    box-sizing: border-box;
  }
  .sbtn.tall {
    width: auto;
    height: 14px;
    border-right: 0;
    border-bottom: 1px solid #c8c8c8;
  }
  .vtrack {
    flex: 1;
    background: linear-gradient(90deg, #fff, #f2f2f2);
  }
  .vtrack + .sbtn.tall {
    border-bottom: 0;
    border-top: 1px solid #c8c8c8;
  }
  .arrow {
    width: 0;
    height: 0;
    border-style: solid;
    display: block;
  }
  .au {
    border-width: 0 4px 4px;
    border-color: transparent transparent #555;
  }
  .ad {
    border-width: 4px 4px 0;
    border-color: #555 transparent transparent;
  }
  .al {
    border-width: 4px 4px 4px 0;
    border-color: transparent #555 transparent transparent;
  }
  .ar {
    border-width: 4px 0 4px 4px;
    border-color: transparent transparent transparent #555;
  }
  .gridbtns {
    margin-top: 6px;
    display: flex;
    gap: 6px;
  }
  .gb {
    width: 63px;
    height: 28px;
    position: relative;
  }
  .gb.add {
    width: 87px;
  }
  .gb.add .mini {
    position: absolute;
    right: 7px;
    top: 12px;
  }
  .mini {
    display: inline-block;
    width: 0;
    height: 0;
    border-style: solid;
    border-width: 3px 3px 0;
    border-color: #333 transparent transparent;
  }
  .mini.light {
    border-color: #9fb6d6 transparent transparent;
  }
  .split {
    width: 6px;
    flex: none;
    display: flex;
    flex-direction: column;
    align-items: center;
    justify-content: center;
    gap: 2px;
  }
  .split i,
  .hsplit i {
    width: 1px;
    height: 1px;
    background: #aaa;
    display: block;
  }
  .right {
    width: 849px;
    flex: none;
    padding: 21px 4px 0;
  }
  .mailbox {
    box-sizing: border-box;
    height: 529px;
    background: #f5f5f5;
    border: 1px solid #e0e0e0;
    border-radius: 2px;
    padding: 3px 4px 0 3px;
  }
  .mailform {
    display: grid;
    grid-template-columns: 60px 735px 35px;
    grid-template-rows: 28px 28px 22px;
    gap: 6px 0;
    align-items: center;
  }
  .flabel {
    text-align: right;
    white-space: nowrap;
  }
  .input {
    box-sizing: border-box;
    height: 22px;
    margin-left: 12px;
    width: 723px;
    background: #fff;
    border: 1px solid #8fb4e4;
    border-radius: 4px;
    padding-left: 6px;
    display: flex;
    align-items: center;
    justify-content: space-between;
    color: #333;
    letter-spacing: -0.1px;
  }
  .input.strong {
    border-color: #6d93c8;
    grid-column: 2;
  }
  .input svg {
    margin: 3px 1px 0 0;
  }
  .sq {
    width: 28px;
    height: 28px;
    justify-self: end;
  }
  .editorwrap {
    margin-top: 6px;
    height: 404px;
    background: #fff;
    display: flex;
    padding: 9px 0 0 8px;
    box-sizing: border-box;
  }
  .editor {
    box-sizing: border-box;
    width: 797px;
    height: 395px;
    overflow: hidden;
    border: 1px solid #c8c8c8;
    border-bottom: 0;
    flex: none;
    background: #fff;
  }
  .toolbar {
    box-sizing: border-box;
    height: 174px;
    background: #f8f8f8;
    border-bottom: 1px solid #d0d0d0;
    padding: 2px 0 0 8px;
  }
  .trow {
    height: 33px;
    display: flex;
    align-items: center;
  }
  .tool {
    box-sizing: border-box;
    width: 28px;
    height: 26px;
    flex: none;
    display: flex;
    align-items: center;
    justify-content: center;
    color: #333;
    font-family: "Liberation Sans", sans-serif;
  }
  .tool svg {
    overflow: visible;
  }
  .tool.dim {
    color: #bbb;
  }
  .tool.on {
    border: 1px solid #bcbcbc;
    background: #fff;
  }
  .tool.wide,
  .tool.colour {
    width: 36px;
    gap: 3px;
    justify-content: flex-start;
    padding-left: 6px;
  }
  .tool.colour {
    width: 35px;
  }
  .tool.colour svg {
    flex: none;
  }
  .sep {
    width: 5px;
    height: 18px;
    flex: none;
    background: linear-gradient(90deg, transparent 2px, #c4c4c4 2px, #c4c4c4 3px, transparent 3px);
  }
  .kaynak {
    width: 71px;
    flex: none;
    padding-left: 6px;
    box-sizing: border-box;
    display: flex;
    align-items: center;
    gap: 4px;
    color: #474747;
  }
  .kaynak svg {
    color: #333;
    flex: none;
  }
  .tcombo {
    box-sizing: border-box;
    flex: none;
    height: 22px;
    padding: 0 8px;
    display: flex;
    align-items: center;
    justify-content: space-between;
    color: #484848;
  }
  .tcombo:first-child {
    padding-left: 11px;
  }
  .mail {
    padding: 12px 0 0 20px;
    font-size: 13px;
    color: #333;
    letter-spacing: 0;
  }
  .mail p {
    margin: 0;
    height: 33px;
    line-height: 33px;
    white-space: pre;
  }
  .mail a {
    color: #1f6db5;
  }
  .tab-gap {
    display: inline-block;
    width: 26px;
  }
  .edscroll {
    width: 15px;
    margin: -9px 0 0 10px;
    height: 404px;
    background: #f0f0f0;
    display: flex;
    flex-direction: column;
    align-items: center;
    justify-content: space-between;
    padding: 6px 0;
    box-sizing: border-box;
    flex: none;
  }
  .edthumb {
    width: 13px;
    height: 286px;
    margin: 0 0 auto;
    background: #bfbfbf;
  }
  .edscroll .au {
    margin-bottom: 4px;
  }
  .tags {
    height: 24px;
    line-height: 28px;
    font-weight: 700;
    font-size: 13px;
    letter-spacing: 0;
  }
  .hsplit {
    height: 23px;
    display: flex;
    gap: 1px;
    justify-content: center;
    padding-top: 1px;
    box-sizing: border-box;
  }
  .attach {
    box-sizing: border-box;
    height: 169px;
    background: #f5f5f5;
    border: 1px solid #e0e0e0;
    border-radius: 2px;
    padding: 12px 0 0 12px;
    display: flex;
  }
  .ekler {
    box-sizing: border-box;
    width: 777px;
    height: 143px;
    background: #fff;
    border: 1px solid #8fb4e4;
    border-radius: 4px;
    padding: 2px 4px;
    display: flex;
  }
  .eklermain {
    flex: 1;
  }
  .eklerhead {
    height: 18px;
    line-height: 19px;
    padding-left: 2px;
    background: linear-gradient(#fff, #ececec);
    border-bottom: 1px solid #aaa;
  }
  .eklerscroll {
    width: 14px;
    flex: none;
    display: flex;
    flex-direction: column;
    border-left: 1px solid #c8c8c8;
    background: #f6f6f6;
  }
  .vtrack.soft {
    background: linear-gradient(90deg, #fafafa, #f0f0f0);
  }
  .attachbtns {
    margin-left: 7px;
    display: flex;
    flex-direction: column;
    gap: 6px;
  }
  .red {
    background: linear-gradient(#b75a74, #9c4660);
    border: 1px dotted #55102a;
  }
  .actions {
    margin-top: 7px;
    display: flex;
    height: 23px;
    padding-left: 582px;
  }
  .act {
    height: 23px;
    box-sizing: border-box;
    font-family: "DejaVu Sans", sans-serif;
    font-size: 10.75px;
    gap: 4px;
    position: relative;
    white-space: nowrap;
  }
  .send {
    width: 80px;
  }
  .later {
    width: 139px;
    margin-left: 6px;
  }
  .other {
    width: 93px;
    margin-left: 6px;
    background: linear-gradient(#8669aa, #6e5490);
    border-color: #47336a;
  }
  .other .mini {
    position: absolute;
    right: 6px;
    top: 10px;
  }
  .cancel {
    width: 80px;
    margin-left: 26px;
    background: linear-gradient(#768893, #5e6f79);
    border-color: #485660;
  }
  .footer {
    flex: 1;
    display: flex;
    align-items: stretch;
    background: #efefef;
  }
  .info {
    margin: 15px 0 0 33px;
  }
  .msgbox {
    width: 558px;
    height: 28px;
    margin: 11px 0 0 21px;
    background: #fff;
  }
  .ficons {
    margin-left: 433px;
    width: 511px;
    padding-top: 13px;
    display: grid;
    grid-template-columns: repeat(9, 61px);
    justify-items: center;
    align-items: start;
  }
</style>
